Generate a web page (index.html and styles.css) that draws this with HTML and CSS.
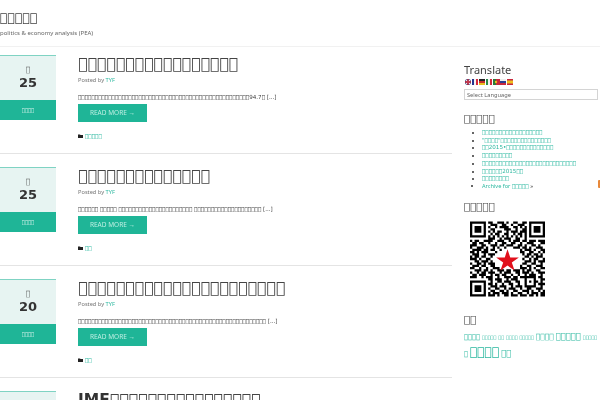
FILE: index.html
```html
<!DOCTYPE html>
<html lang="zh"><head><meta charset="utf-8"><title>politics &amp; economy analysis</title><link rel="stylesheet" href="styles.css"></head>
<body>
<header class="site-head">
  <div class="site-title">&#xE000;&#xE000;&#xE000;&#xE000;&#xE000;</div>
  <div class="site-tag">politics &amp; economy analysis (PEA)</div>
</header>
<div class="page">
<main class="posts">
  <article class="post">
    <div class="date"><div class="date-top"><span class="month">&#xE000;</span><span class="day">25</span></div><div class="date-bar">&#xE000;&#xE000;&#xE000;&#xE000;</div></div>
    <div class="body">
      <h2 class="title">&#xE000;&#xE000;&#xE000;&#xE000;&#xE000;&#xE000;&#xE000;&#xE000;&#xE000;&#xE000;&#xE000;&#xE000;&#xE000;&#xE000;&#xE000;&#xE000;&#xE000;</h2>
      <div class="meta">Posted by <a>TYF</a></div>
      <p class="excerpt">&#xE000;&#xE000;&#xE000;&#xE000;&#xE000;&#xE000;&#xE000;&#xE000;&#xE000;&#xE000;&#xE000;&#xE000;&#xE000;&#xE000;&#xE000;&#xE000;&#xE000;&#xE000;&#xE000;&#xE000;&#xE000;&#xE000;&#xE000;&#xE000;&#xE000;&#xE000;&#xE000;&#xE000;&#xE000;&#xE000;&#xE000;&#xE000;&#xE000;&#xE000;&#xE000;&#xE000;&#xE000;&#xE000;&#xE000;&#xE000;&#xE000;&#xE000;&#xE000;&#xE000;&#xE000;&#xE000;&#xE000;&#xE000;&#xE000;&#xE000;&#xE000;94.7&#xE000; [...]</p>
      <a class="more">READ MORE →</a>
      <div class="cat"><svg class="folder" viewBox="0 0 10 8"><path d="M0 1h4l1 1h5v6H0z"/></svg><a>&#xE000;&#xE000;&#xE000;&#xE000;&#xE000;</a></div>
    </div>
  </article>
  <article class="post">
    <div class="date"><div class="date-top"><span class="month">&#xE000;</span><span class="day">25</span></div><div class="date-bar">&#xE000;&#xE000;&#xE000;&#xE000;</div></div>
    <div class="body">
      <h2 class="title">&#xE000;&#xE000;&#xE000;&#xE000;&#xE000;&#xE000;&#xE000;&#xE000;&#xE000;&#xE000;&#xE000;&#xE000;&#xE000;&#xE000;</h2>
      <div class="meta">Posted by <a>TYF</a></div>
      <p class="excerpt">&#xE000;&#xE000;&#xE000;&#xE000;&#xE000;&#xE000; &#xE000;&#xE000;&#xE000;&#xE000;&#xE000; &#xE000;&#xE000;&#xE000;&#xE000;&#xE000;&#xE000;&#xE000;&#xE000;&#xE000;&#xE000;&#xE000;&#xE000;&#xE000;&#xE000;&#xE000;&#xE000;&#xE000;&#xE000;&#xE000;&#xE000;&#xE000;&#xE000; &#xE000;&#xE000;&#xE000;&#xE000;&#xE000;&#xE000;&#xE000;&#xE000;&#xE000;&#xE000;&#xE000;&#xE000;&#xE000;&#xE000;&#xE000;&#xE000;&#xE000;&#xE000;&#xE000;&#xE000; [...]</p>
      <a class="more">READ MORE →</a>
      <div class="cat"><svg class="folder" viewBox="0 0 10 8"><path d="M0 1h4l1 1h5v6H0z"/></svg><a>&#xE000;&#xE000;</a></div>
    </div>
  </article>
  <article class="post">
    <div class="date"><div class="date-top"><span class="month">&#xE000;</span><span class="day">20</span></div><div class="date-bar">&#xE000;&#xE000;&#xE000;&#xE000;</div></div>
    <div class="body">
      <h2 class="title">&#xE000;&#xE000;&#xE000;&#xE000;&#xE000;&#xE000;&#xE000;&#xE000;&#xE000;&#xE000;&#xE000;&#xE000;&#xE000;&#xE000;&#xE000;&#xE000;&#xE000;&#xE000;&#xE000;&#xE000;&#xE000;&#xE000;</h2>
      <div class="meta">Posted by <a>TYF</a></div>
      <p class="excerpt">&#xE000;&#xE000;&#xE000;&#xE000;&#xE000;&#xE000;&#xE000;&#xE000;&#xE000;&#xE000;&#xE000;&#xE000;&#xE000;&#xE000;&#xE000;&#xE000;&#xE000;&#xE000;&#xE000;&#xE000;&#xE000;&#xE000;&#xE000;&#xE000;&#xE000;&#xE000;&#xE000;&#xE000;&#xE000;&#xE000;&#xE000;&#xE000;&#xE000;&#xE000;&#xE000;&#xE000;&#xE000;&#xE000;&#xE000;&#xE000;&#xE000;&#xE000;&#xE000;&#xE000;&#xE000;&#xE000;&#xE000;&#xE000;&#xE000;&#xE000;&#xE000;&#xE000;&#xE000;&#xE000;&#xE000;&#xE000; [...]</p>
      <a class="more">READ MORE →</a>
      <div class="cat"><svg class="folder" viewBox="0 0 10 8"><path d="M0 1h4l1 1h5v6H0z"/></svg><a>&#xE000;&#xE000;</a></div>
    </div>
  </article>
  <article class="post">
    <div class="date"><div class="date-top"></div></div>
    <div class="body">
      <h2 class="title"><b class="latin">IMF</b>&#xE000;&#xE000;&#xE000;&#xE000;&#xE000;&#xE000;&#xE000;&#xE000;&#xE000;&#xE000;&#xE000;&#xE000;&#xE000;&#xE000;&#xE000;&#xE000;</h2>
    </div>
  </article>
</main>
<aside class="side">
  <h3 class="w-latin">Translate</h3>
  <svg class="flags" viewBox="0 0 48 6" width="48" height="6">
    <rect width="6" height="6" fill="#39508f"/><path d="M0 0l6 6M6 0L0 6" stroke="#eee" stroke-width="1.2"/><path d="M3 0v6M0 3h6" stroke="#c8283c" stroke-width="1.4"/>
    <rect x="7" width="2" height="6" fill="#25338f"/><rect x="9" width="2" height="6" fill="#f2f2f2"/><rect x="11" width="2" height="6" fill="#d8283c"/>
    <rect x="14" width="6" height="2" fill="#222"/><rect x="14" y="2" width="6" height="2" fill="#c4302b"/><rect x="14" y="4" width="6" height="2" fill="#e8c020"/>
    <rect x="21" width="2" height="6" fill="#2a8a4a"/><rect x="23" width="2" height="6" fill="#f2f2f2"/><rect x="25" width="2" height="6" fill="#d8283c"/>
    <rect x="28" width="3" height="6" fill="#2a7a3a"/><rect x="31" width="4" height="6" fill="#c8283c"/><circle cx="31" cy="3" r="1.2" fill="#e8c020"/>
    <rect x="35" width="6" height="2" fill="#eee"/><rect x="35" y="2" width="6" height="2" fill="#2a3f90"/><rect x="35" y="4" width="6" height="2" fill="#c8283c"/>
    <rect x="42" width="6" height="6" fill="#c8283c"/><rect x="42" y="1.5" width="6" height="3" fill="#eec020"/>
  </svg>
  <select class="lang"><option>Select Language</option></select>
  <h3 class="w-head">&#xE000;&#xE000;&#xE000;&#xE000;&#xE000;</h3>
  <ul class="links">
    <li><a>&#xE000;&#xE000;&#xE000;&#xE000;&#xE000;&#xE000;&#xE000;&#xE000;&#xE000;&#xE000;&#xE000;&#xE000;&#xE000;&#xE000;&#xE000;&#xE000;&#xE000;&#xE000;</a></li>
    <li><a>"&#xE000;&#xE000;&#xE000;&#xE000;"&#xE000;&#xE000;&#xE000;&#xE000;&#xE000;&#xE000;&#xE000;&#xE000;&#xE000;&#xE000;&#xE000;&#xE000;&#xE000;&#xE000;&#xE000;</a></li>
    <li><a>&#xE000;&#xE000;2015•&#xE000;&#xE000;&#xE000;&#xE000;&#xE000;&#xE000;&#xE000;&#xE000;&#xE000;&#xE000;&#xE000;&#xE000;&#xE000;&#xE000;</a></li>
    <li><a>&#xE000;&#xE000;&#xE000;&#xE000;&#xE000;&#xE000;&#xE000;&#xE000;&#xE000;</a></li>
    <li><a>&#xE000;&#xE000;&#xE000;&#xE000;&#xE000;&#xE000;&#xE000;&#xE000;&#xE000;&#xE000;&#xE000;&#xE000;&#xE000;&#xE000;&#xE000;&#xE000;&#xE000;&#xE000;&#xE000;&#xE000;&#xE000;&#xE000;&#xE000;&#xE000;&#xE000;&#xE000;&#xE000;&#xE000;</a></li>
    <li><a>&#xE000;&#xE000;&#xE000;&#xE000;&#xE000;&#xE000;2015&#xE000;&#xE000;</a></li>
    <li><a>&#xE000;&#xE000;&#xE000;&#xE000;&#xE000;&#xE000;&#xE000;&#xE000;</a></li>
    <li class="arch"><a>Archive for <span class="tofu">&#xE000;&#xE000;&#xE000;&#xE000;&#xE000;</span></a> »<span class="rss"></span></li>
  </ul>
  <h3 class="w-head w-qr">&#xE000;&#xE000;&#xE000;&#xE000;&#xE000;</h3>
  <svg class="qr" viewBox="0 0 33 33" width="75" height="76" role="img" aria-label="QR code">
    <path fill="none" stroke="#000" stroke-width="1" d="M0 .5h7M8 .5h2M12 .5h3M16 .5h1M19 .5h2M23 .5h2M26 .5h7
    M0 1.5h1M6 1.5h1M9 1.5h3M14 1.5h2M18 1.5h1M21 1.5h3M26 1.5h1M32 1.5h1
    M0 2.5h1M2 2.5h3M6 2.5h1M8 2.5h1M11 2.5h1M13 2.5h4M19 2.5h2M22 2.5h1M24 2.5h1M26 2.5h1M28 2.5h3M32 2.5h1
    M0 3.5h1M2 3.5h3M6 3.5h1M9 3.5h2M15 3.5h3M20 3.5h1M23 3.5h2M26 3.5h1M28 3.5h3M32 3.5h1
    M0 4.5h1M2 4.5h3M6 4.5h1M8 4.5h1M10 4.5h1M12 4.5h2M16 4.5h1M18 4.5h3M22 4.5h3M26 4.5h1M28 4.5h3M32 4.5h1
    M0 5.5h1M6 5.5h1M9 5.5h1M11 5.5h2M15 5.5h2M19 5.5h1M21 5.5h2M24 5.5h1M26 5.5h1M32 5.5h1
    M0 6.5h7M8 6.5h1M10 6.5h1M12 6.5h1M14 6.5h1M16 6.5h1M18 6.5h1M20 6.5h1M22 6.5h1M24 6.5h1M26 6.5h7
    M8 7.5h3M13 7.5h1M15 7.5h3M20 7.5h2M24 7.5h1
    M0 8.5h1M2 8.5h2M6 8.5h1M7 8.5h3M12 8.5h3M17 8.5h1M19 8.5h3M23 8.5h2M26 8.5h3M30 8.5h3
    M1 9.5h2M4 9.5h2M8 9.5h1M11 9.5h1M14 9.5h2M18 9.5h2M22 9.5h1M25 9.5h3M31 9.5h2
    M0 10.5h3M5 10.5h2M9 10.5h3M13 10.5h2M16 10.5h3M21 10.5h2M24 10.5h1M27 10.5h2M30 10.5h1
    M0 11.5h1M3 11.5h3M7 11.5h1M10 11.5h1M12 11.5h1M15 11.5h1M19 11.5h3M23 11.5h2M26 11.5h1M29 11.5h3
    M1 12.5h4M6 12.5h2M9 12.5h2M13 12.5h1M22 12.5h1M24 12.5h3M28 12.5h1M31 12.5h2
    M0 13.5h2M3 13.5h1M5 13.5h3M11 13.5h1M22 13.5h2M26 13.5h2M30 13.5h1M32 13.5h1
    M1 14.5h3M6 14.5h1M8 14.5h3M23 14.5h1M25 14.5h2M28 14.5h2M31 14.5h1
    M0 15.5h1M2 15.5h2M5 15.5h2M9 15.5h1M24 15.5h2M27 15.5h1M29 15.5h3
    M0 16.5h3M4 16.5h1M7 16.5h2M23 16.5h1M26 16.5h1M28 16.5h2M32 16.5h1
    M2 17.5h2M5 17.5h3M9 17.5h1M24 17.5h3M28 17.5h1M30 17.5h3
    M0 18.5h1M3 18.5h2M6 18.5h1M8 18.5h3M23 18.5h2M27 18.5h2M31 18.5h1
    M1 19.5h3M5 19.5h2M9 19.5h2M22 19.5h1M25 19.5h2M29 19.5h3
    M0 20.5h2M4 20.5h1M7 20.5h1M10 20.5h3M22 20.5h3M26 20.5h1M28 20.5h1M31 20.5h2
    M2 21.5h3M6 21.5h2M9 21.5h1M12 21.5h3M16 21.5h2M19 21.5h3M23 21.5h1M25 21.5h2M29 21.5h2
    M0 22.5h1M3 22.5h1M5 22.5h2M8 22.5h3M13 22.5h1M15 22.5h3M20 22.5h2M23 22.5h3M27 22.5h1M30 22.5h3
    M1 23.5h2M4 23.5h3M9 23.5h1M11 23.5h2M14 23.5h2M18 23.5h1M21 23.5h1M24 23.5h1M26 23.5h3M31 23.5h1
    M0 24.5h3M5 24.5h1M7 24.5h3M12 24.5h1M15 24.5h3M19 24.5h2M22 24.5h7M30 24.5h2
    M8 25.5h2M11 25.5h3M16 25.5h1M18 25.5h3M24 25.5h1M28 25.5h1M31 25.5h2
    M0 26.5h7M9 26.5h1M12 26.5h2M15 26.5h3M20 26.5h2M24 26.5h1M26 26.5h1M28 26.5h2M31 26.5h1
    M0 27.5h1M6 27.5h1M8 27.5h2M11 27.5h1M14 27.5h1M17 27.5h2M21 27.5h1M24 27.5h1M28 27.5h1M30 27.5h3
    M0 28.5h1M2 28.5h3M6 28.5h1M9 28.5h3M13 28.5h3M18 28.5h1M20 28.5h3M24 28.5h5M31 28.5h1
    M0 29.5h1M2 29.5h3M6 29.5h1M8 29.5h1M11 29.5h2M15 29.5h1M17 29.5h3M22 29.5h1M25 29.5h2M29 29.5h3
    M0 30.5h1M2 30.5h3M6 30.5h1M9 30.5h2M13 30.5h2M16 30.5h1M19 30.5h2M23 30.5h3M27 30.5h1M30 30.5h1M32 30.5h1
    M0 31.5h1M6 31.5h1M8 31.5h1M10 31.5h3M14 31.5h3M18 31.5h1M21 31.5h2M25 31.5h1M27 31.5h3M31 31.5h2
    M0 32.5h7M8 32.5h3M12 32.5h1M15 32.5h2M18 32.5h3M22 32.5h3M26 32.5h2M29 32.5h1M31 32.5h2"/>
    <path fill="#e1101c" d="M16.5 12.2l1.2 3.6h3.8l-3.1 2.2 1.2 3.6-3.1-2.2-3.1 2.2 1.2-3.6-3.1-2.2h3.8z"/>
  </svg>
  <h3 class="w-head w-tags">&#xE000;&#xE000;</h3>
  <div class="tags">
    <a class="t2">&#xE000;&#xE000;&#xE000;&#xE000;</a> <a class="t1">&#xE000;&#xE000;&#xE000;&#xE000;&#xE000;</a> <a class="t1">&#xE000;&#xE000;</a> <a class="t1">&#xE000;&#xE000;&#xE000;&#xE000;</a> <a class="t1">&#xE000;&#xE000;&#xE000;&#xE000;&#xE000;</a> <a class="t3">&#xE000;&#xE000;&#xE000;&#xE000;</a> <a class="t4">&#xE000;&#xE000;&#xE000;&#xE000;&#xE000;</a> <a class="t1">&#xE000;&#xE000;&#xE000;&#xE000;&#xE000;</a>
    <a class="t2">&#xE000;</a> <a class="t5">&#xE000;&#xE000;&#xE000;&#xE000;</a> <a class="t4">&#xE000;&#xE000;</a>
  </div>
</aside>
</div>
</body></html>
```
FILE: styles.css
```css
html,body{margin:0;padding:0;height:400px;overflow:hidden}
html{background:#fff}
body{font-family:"Noto Sans",sans-serif;color:#555;font-size:6px;will-change:transform}
a{color:#2cb8a0;text-decoration:none}
.site-head{height:46px;border-bottom:1px solid #f1f1f1}
.site-title{font:12.5px/16px "DejaVu Sans",sans-serif;color:#444;padding-top:10px}
.site-tag{font-size:6px;line-height:8px;color:#666;margin-top:3px}
.page{display:flex;align-items:flex-start}
.posts{width:452px;flex:none}
.post{display:flex;height:98px;padding-top:8px;border-bottom:1px solid #e4e4e4}
.post+.post{padding-top:13px}
.date{width:56px;flex:none;height:65px;display:flex;flex-direction:column}
.date-top{flex:1;background:#e7f4f2;border-top:1px solid #7fd3c3;display:flex;flex-direction:column;align-items:center;padding-top:8px}
.month{font:7.5px/12px "DejaVu Sans",sans-serif;color:#555}
.day{font:bold 13px/14px "DejaVu Sans",sans-serif;color:#333}
.date-bar{height:20px;background:#1fb597;color:#d8f3ec;font:5.2px/20px "DejaVu Sans",sans-serif;text-align:center}
.body{margin-left:22px;flex:1;min-width:0}
.title{margin:0;font:400 15.7px/18px "DejaVu Sans",sans-serif;color:#444;white-space:nowrap}
.latin{font-weight:700;color:#333;font-size:15.5px}
.meta{font-size:5.7px;line-height:8px;margin-top:3px;color:#777}
.excerpt{margin:9px 0 0;font:5.6px/8px "DejaVu Sans",sans-serif;color:#444;white-space:nowrap}
.more{display:block;width:69px;height:18px;line-height:17px;margin-top:3px;background:#1fb597;color:#bdeee2;text-align:center;font-size:6.5px}
.cat{display:flex;align-items:center;gap:2px;margin-top:10px;font:5.6px/8px "DejaVu Sans",sans-serif}
.folder{width:5px;height:4px;fill:#222}
.side{width:134px;margin:16px 0 0 12px;flex:none;position:relative}
h3{margin:0;font-weight:400;color:#444}
.w-latin{font:11px/14px "Noto Sans",sans-serif}
.flags{display:block;margin:2px 0 0 1px}
.lang{display:block;width:134px;height:11px;margin-top:4px;padding:0 2px;font:5.7px "Noto Sans",sans-serif;color:#666;background:#fff;border:1px solid #d4d4d4;border-radius:0;appearance:none}
.w-head{font:10.3px/14px "DejaVu Sans",sans-serif;margin-top:11px}
.links{margin:4px 0 0;padding:0 0 0 18px;font:5.6px/7.7px "DejaVu Sans",sans-serif;color:#333}
.links li{position:relative}
.arch{font-family:"Noto Sans",sans-serif}
.tofu{font-family:"DejaVu Sans",sans-serif}
.rss{position:absolute;left:116px;top:-3px;width:8px;height:8px;border-radius:1px;background:#e8893a}
.w-qr{margin-top:8px}
.qr{display:block;margin:8px 0 0 6px}
.w-tags{margin-top:15px}
.tags{font-family:"DejaVu Sans",sans-serif;line-height:15px;margin:3px -4px 0 0}
.t1{font-size:4.8px}.t2{font-size:6.7px}.t3{font-size:7.5px}.t4{font-size:8.4px}.t5{font-size:12.2px}
```
